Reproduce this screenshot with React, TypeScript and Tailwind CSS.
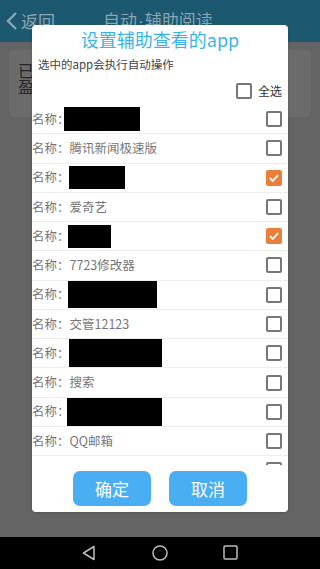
import React from "react";

type Row = {
	name?: string;
	box?: string; // 打码块
	checked?: boolean;
	cut?: boolean; // 被裁掉的最后一行
};

const rows: Row[] = [
	{ box: "ml-[-6px] w-[76px] h-[24px]" },
	{ name: "腾讯新闻极速版" },
	{ box: "ml-[-1px] w-[56px] h-[23px]", checked: true },
	{ name: "爱奇艺" },
	{ box: "ml-[-2px] w-[43px] h-[23px]", checked: true },
	{ name: "7723修改器" },
	{ box: "ml-[-2px] w-[89px] h-[27px]" },
	{ name: "交管12123" },
	{ box: "ml-[-1px] w-[93px] h-[28px]" },
	{ name: "搜索" },
	{ box: "ml-[-3px] w-[95px] h-[28px]" },
	{ name: "QQ邮箱" },
	{ name: "", cut: true },
];

function CheckBox({ checked }: { checked?: boolean }) {
	if (checked) {
		return (
			<div className="w-[16px] h-[16px] rounded-[2px] bg-[#e8803c] flex items-center justify-center">
				<svg width="12" height="12" viewBox="0 0 12 12">
					<path d="M2 6.2 L4.8 9 L10 3.2" fill="none" stroke="#fff" strokeWidth="1.8" />
				</svg>
			</div>
		);
	}
	return <div className="w-[16px] h-[16px] rounded-[2px] border-2 border-[#777]" />;
}

export default function App() {
	return (
		<div
			className="relative w-[320px] h-[569px] overflow-hidden flex flex-col bg-[#646464]"
			style={{ fontFamily: '"Noto Sans CJK SC", "Noto Sans", sans-serif' }}
		>
			{/* 顶部栏 (被遮罩) */}
			<div className="h-[42px] bg-[#1d5871] flex items-center text-[#8aa5b2]">
				<svg width="14" height="20" viewBox="0 0 14 20" className="ml-[5px]">
					<path d="M11 2 L3 10 L11 18" fill="none" stroke="#8aa5b2" strokeWidth="2.4" />
				</svg>
				<span className="ml-[2px] text-[17px]">返回</span>
				<span className="ml-[48px] text-[17px]">
					自动<span className="font-['Liberation_Sans'] px-[1px]">·</span>辅助阅读
				</span>
			</div>

			<div className="flex-1 px-[9px] pt-[8px]">
				<div className="h-[67px] rounded-[4px] bg-[#6b6b6b] pl-[9px] pt-[12px] text-[16px] leading-[16px] text-[#262626]">
					<div>已</div>
					<div>盈</div>
				</div>
			</div>

			{/* 底部导航 */}
			<div className="h-[32px] bg-black flex items-center">
				<svg width="14" height="16" viewBox="0 0 14 16" className="ml-[82px]">
					<path d="M12 1.5 L12 14.5 L1.5 8 Z" fill="none" stroke="#bdbdbd" strokeWidth="1.5" strokeLinejoin="round" />
				</svg>
				<svg width="16" height="16" viewBox="0 0 16 16" className="ml-[56px]">
					<circle cx="8" cy="8" r="7" fill="none" stroke="#bdbdbd" strokeWidth="1.5" />
				</svg>
				<svg width="16" height="16" viewBox="0 0 16 16" className="ml-[55px]">
					<rect x="1" y="1" width="13" height="13" rx="1" fill="none" stroke="#bdbdbd" strokeWidth="1.5" />
				</svg>
			</div>

			{/* 弹窗 */}
			<div className="absolute left-[32px] top-[25px] w-[256px] h-[487px] bg-white rounded-[4px] flex flex-col shadow-sm">
				<div className="h-[28px] flex items-center justify-center text-[18px] text-[#3cb4ea]">
					设置辅助查看的app
				</div>
				<div className="h-[24px] flex items-center pl-[6px] text-[11.5px] text-[#444]">
					选中的app会执行自动操作
				</div>
				<div className="h-[28px] flex items-center justify-end pr-[6px] gap-[6px]">
					<CheckBox />
					<span className="text-[12px] text-[#333]">全选</span>
				</div>
				<div className="h-[360px] overflow-hidden">
					{rows.map((row, idx) => (
						<div
							key={idx}
							className="h-[29.27px] border-b border-[#eeeeee] flex items-center pr-[6px] text-[12.5px] text-[#777]"
						>
							{!row.cut && <span>名称：</span>}
							{row.box ? <div className={`bg-black ${row.box}`} /> : <span>{row.name}</span>}
							<div className="ml-auto">
								<CheckBox checked={row.checked} />
							</div>
						</div>
					))}
				</div>
				<div className="mt-[6px] flex justify-center gap-[18px]">
					<button
						type="button"
						className="w-[78px] h-[35px] rounded-[7px] bg-[#49aff2] text-white text-[17px]"
					>
						确定
					</button>
					<button
						type="button"
						className="w-[78px] h-[35px] rounded-[7px] bg-[#49aff2] text-white text-[17px]"
					>
						取消
					</button>
				</div>
			</div>
		</div>
	);
}
